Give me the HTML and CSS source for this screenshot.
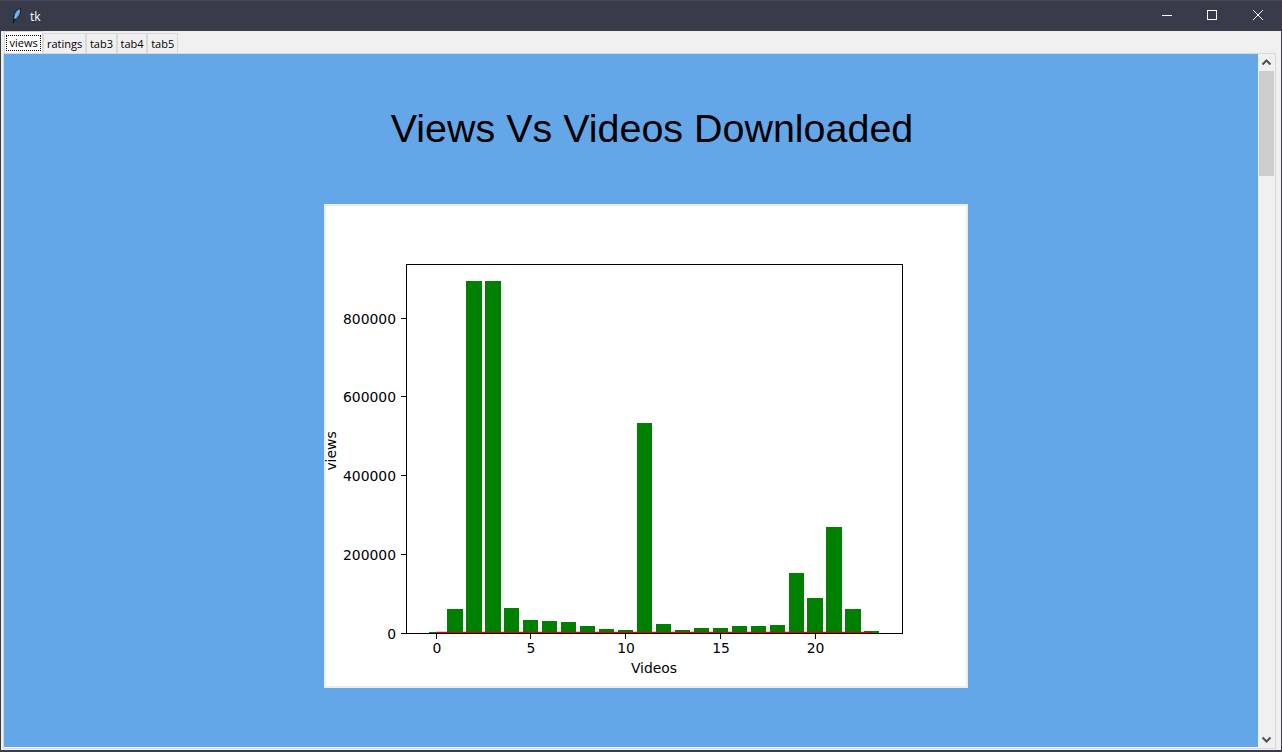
FILE: index.html
```html
<!DOCTYPE html>
<html lang="en">
<head>
    <meta charset="UTF-8">
    <title>tk</title>
    <link rel="stylesheet" href="styles.css">
</head>
<body>
    <div class="window">
        <div class="titlebar">
            <svg class="app-icon" width="10" height="16" viewBox="0 0 10 16">
                <path d="M8.5 0.5 C5 1 2.5 4 1.8 8 L1.8 11.5 L4.5 11 C7.5 8.5 9.5 4.5 8.5 0.5 Z" fill="#5b9be0" stroke="#10131c" stroke-width="1"/>
                <path d="M7 3 C5 5.5 3.5 8 2.8 10.5" stroke="#a9cdf5" stroke-width="1" fill="none"/>
                <path d="M2.5 11 L1.2 15" stroke="#10131c" stroke-width="1.2" fill="none"/>
            </svg>
            <span class="app-title">tk</span>
            <div class="controls">
                <svg class="control" width="46" height="30" viewBox="0 0 46 30"><path d="M18 14.5 H28" stroke="#fff" stroke-width="1"/></svg>
                <svg class="control" width="46" height="30" viewBox="0 0 46 30"><rect x="17.5" y="9.5" width="9" height="9" fill="none" stroke="#fff" stroke-width="1"/></svg>
                <svg class="control" width="46" height="30" viewBox="0 0 46 30"><path d="M17 9 L27 19 M27 9 L17 19" stroke="#fff" stroke-width="1"/></svg>
            </div>
        </div>

        <div class="tabs">
            <div class="tab active"><span class="focus">views</span></div>
            <div class="tab">ratings</div>
            <div class="tab">tab3</div>
            <div class="tab">tab4</div>
            <div class="tab">tab5</div>
        </div>

        <div class="panel">
            <div class="content">
                <h1 class="heading">Views Vs Videos Downloaded</h1>
                <div class="figure">
                    <svg class="chart" width="640" height="480" viewBox="0 0 640 480">
                        <g fill="#008000">
                            <rect x="103" y="426" width="15" height="1"/>
                            <rect x="121" y="403" width="16" height="24"/>
                            <rect x="140" y="75" width="16" height="352"/>
                            <rect x="159" y="75" width="16" height="352"/>
                            <rect x="178" y="402" width="15" height="25"/>
                            <rect x="197" y="414" width="15" height="13"/>
                            <rect x="216" y="415" width="15" height="12"/>
                            <rect x="235" y="416" width="15" height="11"/>
                            <rect x="254" y="420" width="15" height="7"/>
                            <rect x="273" y="423" width="15" height="4"/>
                            <rect x="292" y="424" width="15" height="3"/>
                            <rect x="311" y="217" width="15" height="210"/>
                            <rect x="330" y="418" width="15" height="9"/>
                            <rect x="349" y="424" width="15" height="3"/>
                            <rect x="368" y="422" width="15" height="5"/>
                            <rect x="387" y="422" width="15" height="5"/>
                            <rect x="406" y="420" width="15" height="7"/>
                            <rect x="425" y="420" width="15" height="7"/>
                            <rect x="444" y="419" width="15" height="8"/>
                            <rect x="463" y="367" width="15" height="60"/>
                            <rect x="481" y="392" width="16" height="35"/>
                            <rect x="500" y="321" width="16" height="106"/>
                            <rect x="519" y="403" width="16" height="24"/>
                            <rect x="538" y="425" width="15" height="2"/>
                        </g>
                        <path d="M110 426.5 H546" stroke="#e00000" stroke-width="1.6" fill="none"/>
                        <rect x="80.5" y="58.5" width="496" height="369" fill="none" stroke="#000" stroke-width="1"/>
                        <path d="M110.5 428 v5 M204.5 428 v5 M299.5 428 v5 M394.5 428 v5 M489.5 428 v5" stroke="#000" stroke-width="1"/>
                        <path d="M75 427.5 h5 M75 348.5 h5 M75 269.5 h5 M75 190.5 h5 M75 112.5 h5" stroke="#000" stroke-width="1"/>
                        <g class="tick-x">
                            <text x="111" y="447">0</text>
                            <text x="205" y="447">5</text>
                            <text x="300" y="447">10</text>
                            <text x="395" y="447">15</text>
                            <text x="489.5" y="447">20</text>
                        </g>
                        <g class="tick-y">
                            <text x="70" y="433">0</text>
                            <text x="70" y="354">200000</text>
                            <text x="70" y="275">400000</text>
                            <text x="70" y="196">600000</text>
                            <text x="70" y="118">800000</text>
                        </g>
                        <text class="tick-x" x="328" y="467">Videos</text>
                        <text class="tick-x" transform="translate(10 245) rotate(-90)">views</text>
                    </svg>
                </div>
            </div>
            <div class="scrollbar">
                <svg class="arrow" width="17" height="17" viewBox="0 0 17 17"><path d="M4.5 10.5 L8.5 6.5 L12.5 10.5" fill="none" stroke="#505050" stroke-width="2"/></svg>
                <div class="thumb"></div>
                <div class="track"></div>
                <svg class="arrow" width="17" height="17" viewBox="0 0 17 17"><path d="M4.5 6.5 L8.5 10.5 L12.5 6.5" fill="none" stroke="#505050" stroke-width="2"/></svg>
            </div>
        </div>
    </div>
</body>
</html>
```

FILE: styles.css
```css
html, body {
    margin: 0;
    height: 100%;
    overflow: hidden;
}

.window {
    box-sizing: border-box;
    width: 1282px;
    height: 752px;
    display: flex;
    flex-direction: column;
    background-color: #f0f0f0;
    border-left: 1px solid #383c4a;
    border-right: 1px solid #383c4a;
    border-bottom: 2px solid #383c4a;
    font-family: "Open Sans", "Noto Sans", sans-serif;
}

.titlebar {
    height: 31px;
    flex: none;
    display: flex;
    align-items: center;
    margin: 0 -1px;
    padding-left: 11px;
    background-color: #383c4a;
    border-top: 1px solid #434756;
    box-sizing: border-box;
}

.app-icon {
    margin-left: 1px;
}

.app-title {
    margin-left: 8px;
    color: #fff;
    font-size: 12px;
}

.controls {
    margin-left: auto;
    display: flex;
}

.control {
    display: block;
}

.tabs {
    height: 22px;
    flex: none;
    display: flex;
    align-items: flex-end;
    padding-left: 3px;
    font-size: 11px;
    color: #000;
}

.tab {
    height: 20px;
    box-sizing: border-box;
    padding: 0 2.8px;
    display: flex;
    align-items: center;
    border: 1px solid #d9d9d9;
    border-bottom: none;
    background-color: #f0f0f0;
}

.tab.active {
    height: 22px;
    padding: 0 1px;
    background-color: #fff;
    border-bottom: none;
}

.focus {
    padding: 0 2.5px;
    border: 1px dotted #000;
    line-height: 14px;
}

.panel {
    flex: 1;
    min-height: 0;
    display: flex;
    margin: 0 5px 1px 2px;
    border: 1px solid #d9d9d9;
}

.content {
    flex: 1;
    min-width: 0;
    display: flex;
    flex-direction: column;
    align-items: center;
    padding-left: 30px;
    background-color: #64a7e8;
    border-bottom: 1px solid #fff;
}

.heading {
    margin: 48px 0 50px 12px;
    font-family: "Liberation Sans", Arial, sans-serif;
    font-size: 39.45px;
    line-height: 52px;
    font-weight: normal;
    color: #000;
}

.figure {
    border: 2px solid #ececec;
    background-color: #fff;
    line-height: 0;
}

.chart {
    display: block;
    overflow: visible;
}

.chart text {
    font-family: "DejaVu Sans", sans-serif;
    font-size: 13.9px;
    fill: #000;
}

.tick-x {
    text-anchor: middle;
}

.tick-y {
    text-anchor: end;
}

.scrollbar {
    width: 17px;
    flex: none;
    display: flex;
    flex-direction: column;
    background-color: #f0f0f0;
}

.arrow {
    display: block;
    flex: none;
}

.thumb {
    height: 105px;
    flex: none;
    margin: 0 1px;
    background-color: #cdcdcd;
}

.track {
    flex: 1;
}
```
